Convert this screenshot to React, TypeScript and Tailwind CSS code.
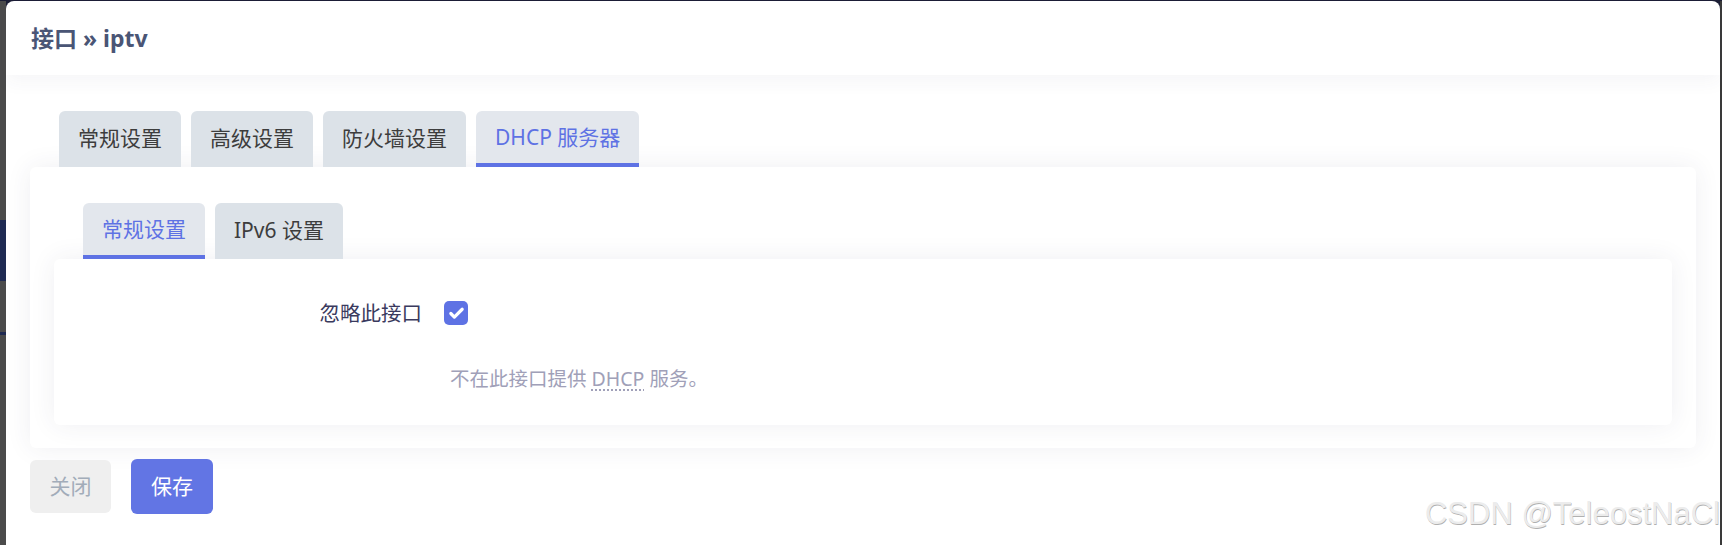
import { Check } from "lucide-react";

const font = { fontFamily: '"Noto Sans", "Noto Sans CJK SC", sans-serif' };

interface TabProps {
  label: string;
  active?: boolean;
}

const Tab: React.FC<TabProps> = ({ label, active }) => (
  <div
    className={
      "h-[56px] px-[19px] flex items-center rounded-t-[6px] text-[21px] " +
      (active
        ? "bg-[#e3e7ed] text-[#5e72e4] border-b-4 border-[#5e72e4] pt-[2px]"
        : "bg-[#dce2e8] text-[#3d3d3d]")
    }
  >
    {label}
  </div>
);

export default function App() {
  return (
    <div className="w-[1722px] h-[545px] flex flex-col bg-[#1c1e36] overflow-hidden relative" style={font}>
      <div className="h-[1px] shrink-0" />
      <div className="flex flex-1 min-h-0">
        {/* backdrop peeking out on the left */}
        <div className="w-[6px] flex flex-col bg-[#4b4b4b]">
          <div className="h-[219px]" />
          <div className="h-[61px] bg-[#1f2a52]" />
          <div className="h-[51px]" />
          <div className="h-[3px] bg-[#1f2a52]" />
        </div>

        <div className="flex-1 bg-white rounded-t-[8px] flex flex-col">
          <div className="h-[74px] shrink-0 px-[25px] flex items-center shadow-[0_6px_18px_rgba(50,50,93,0.05)] relative">
            <h1 className="text-[23px] font-bold text-[#4a5575] leading-none">接口 » iptv</h1>
          </div>

          <div className="px-[24px] pt-[36px]">
            <div className="flex gap-[10px] pl-[29px]">
              <Tab label="常规设置" />
              <Tab label="高级设置" />
              <Tab label="防火墙设置" />
              <Tab label="DHCP 服务器" active />
            </div>

            <div className="bg-white rounded-[6px] shadow-[0_0_26px_rgba(50,50,93,0.08)] px-[24px] pt-[36px] pb-[23px]">
              <div className="flex gap-[10px] pl-[29px]">
                <Tab label="常规设置" active />
                <Tab label="IPv6 设置" />
              </div>

              <div className="h-[166px] bg-white rounded-[6px] shadow-[0_0_26px_rgba(50,50,93,0.08)] pt-[39px]">
                <div className="flex items-center">
                  <div className="w-[368px] text-right text-[20.5px] text-[#3a3a5e]">忽略此接口</div>
                  <div className="ml-[22px] w-[24px] h-[24px] rounded-[5px] bg-[#5e72e4] flex items-center justify-center">
                    <Check className="text-white" size={17} strokeWidth={4.5} />
                  </div>
                </div>
                <div className="mt-[35px] pl-[396px] text-[19.5px] text-[#a0a0b8]">
                  不在此接口提供{" "}
                  <abbr className="underline decoration-dotted decoration-[#a0a0b8] underline-offset-[4px]">DHCP</abbr>{" "}
                  服务。
                </div>
              </div>
            </div>

            <div className="flex gap-[20px] mt-[12px]">
              <button className="w-[81px] h-[53px] rounded-[6px] bg-[#efefef] text-[#a2acb9] text-[21px]">关闭</button>
              <button className="w-[82px] h-[55px] -mt-[1px] rounded-[6px] bg-[#6275e4] text-white text-[21px]">保存</button>
            </div>
          </div>
        </div>

        <div className="w-[2px] bg-[#3a3a3a]" />
      </div>

      <div
        className="absolute right-[2px] bottom-[16px] text-[31px] text-[#ececec] leading-none"
        style={{ fontFamily: '"Liberation Sans", Arial, sans-serif', textShadow: "0.5px 0.5px 0.5px #b0b0b0" }}
      >
        CSDN @TeleostNaCl
      </div>
    </div>
  );
}
